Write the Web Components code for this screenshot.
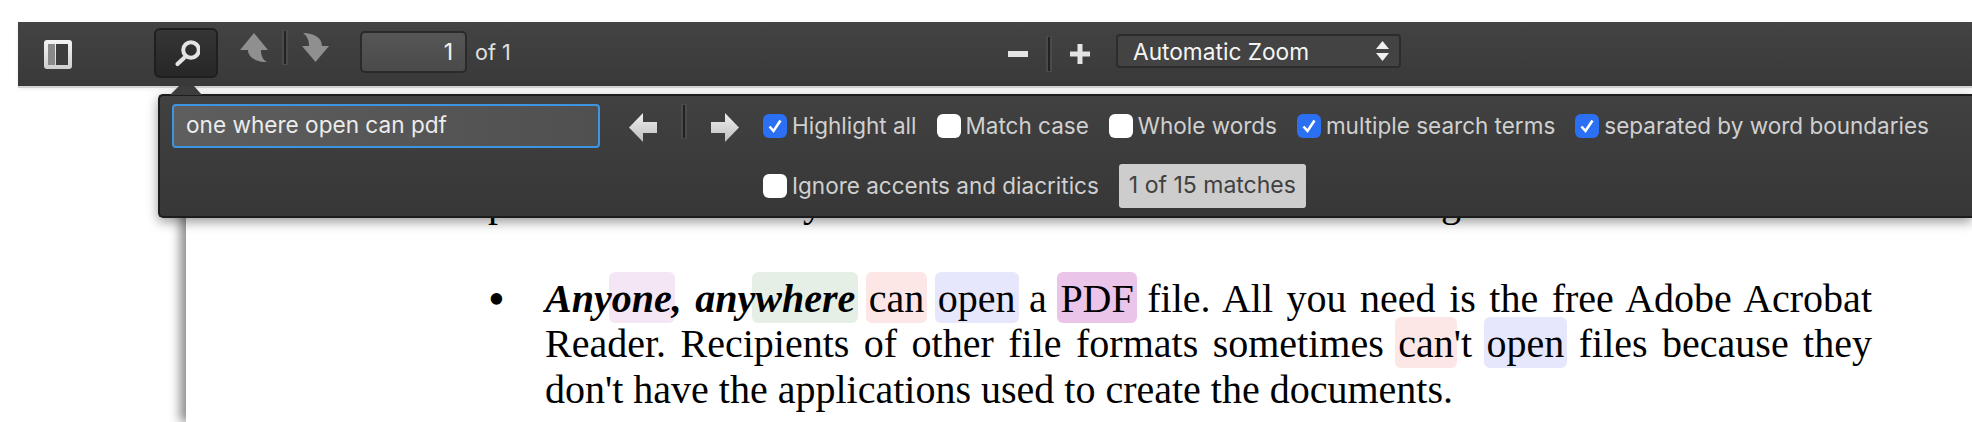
<!DOCTYPE html>
<html lang="en">
<head>
<meta charset="utf-8">
<title>PDF viewer find bar</title>
<style>
html, body { margin: 0; background: #fff; }
</style>
</head>
<body>
<pdf-viewer>
    <pdf-toolbar slot="toolbar"></pdf-toolbar>
    <find-bar slot="find">
        <find-option checked>Highlight all</find-option>
        <find-option>Match case</find-option>
        <find-option>Whole words</find-option>
        <find-option checked>multiple search terms</find-option>
        <find-option checked>separated by word boundaries</find-option>
        <find-option>Ignore accents and diacritics</find-option>
    </find-bar>
    <pdf-page slot="page"></pdf-page>
</pdf-viewer>

<script>
(function () {
    'use strict';

    const UI_FONT = 'Inter, "Noto Sans", sans-serif';

    // thin grooved divider used between the arrow and zoom buttons
    const SEP = (h) => `<span style="display:block;flex:none;box-sizing:border-box;width:6px;height:${h}px;background:#222;border:2px solid #4a4a4a;border-width:1px 2px"></span>`;

    class PdfViewer extends HTMLElement {
        constructor() {
            super();
            this.attachShadow({ mode: 'open' });
        }

        connectedCallback() {
            this.shadowRoot.innerHTML = `
                <style>
                    :host { display: block; position: relative; height: 422px; box-sizing: border-box; padding-top: 22px; overflow: hidden; background: #fff; }
                </style>
                <slot name="toolbar"></slot>
                <slot name="page"></slot>
                <slot name="find"></slot>
            `;
        }
    }

    class PdfToolbar extends HTMLElement {
        constructor() {
            super();
            this.attachShadow({ mode: 'open' });
        }

        connectedCallback() {
            this.shadowRoot.innerHTML = `
                <style>
                    :host { display: flex; position: relative; z-index: 1; align-items: center; height: 64px; margin-left: 18px; border-bottom: 2px solid #d2d2d2; background: linear-gradient(#434343, #393939); box-shadow: 0 1px 4px rgba(0, 0, 0, .08); color: #e0e0e0; font: 21.5px ${UI_FONT}; }
                    svg { display: block; flex: none; }
                    .toggle { margin-left: 26px; }
                    .search { display: flex; align-items: center; justify-content: center; box-sizing: border-box; width: 64px; height: 50px; margin: 0 0 2px 82px; border: 2px solid #1f1f1f; border-radius: 6px; background: linear-gradient(#353535, #272727); }
                    .raised { margin-bottom: 13px; }
                    .page { box-sizing: border-box; width: 107px; height: 42px; margin: 0 0 4px 31px; padding-right: 12px; border: 2px solid #2a2a2a; border-radius: 5px; background: linear-gradient(#565656, #4a4a4a); color: #f2f2f2; font-size: 23px; line-height: 38px; text-align: right; }
                    .of { margin: 0 0 4px 8px; }
                    .zoom { display: flex; align-items: center; margin-left: auto; margin-right: 571px; }
                    .select { display: flex; align-items: center; justify-content: space-between; box-sizing: border-box; width: 285px; height: 34px; margin: 0 0 6px 26px; padding: 0 7px 0 15px; border: 2px solid #2c2c2c; border-radius: 4px; background: #434343; color: #f5f5f5; font-size: 22.7px; }
                </style>
                <svg class="toggle" width="28" height="29" viewBox="0 0 28 29">
                    <defs><linearGradient id="lt" x1="0" y1="0" x2="0" y2="1"><stop offset="0" stop-color="#f4f4f4"/><stop offset="1" stop-color="#cfcfcf"/></linearGradient></defs>
                    <rect width="28" height="29" rx="3" fill="url(#lt)"/>
                    <rect x="4" y="4" width="7" height="21" fill="#8a8a8a"/>
                    <rect x="12" y="4" width="12" height="21" fill="#3d3d3d"/>
                </svg>
                <span class="search">
                    <svg width="28" height="28" viewBox="0 0 28 28" fill="none" stroke="#e4e4e4">
                        <circle cx="19" cy="11" r="7.8" stroke-width="4"/>
                        <path d="M12 19 5.5 25" stroke-width="4.2" stroke-linecap="round"/>
                    </svg>
                </span>
                <svg class="raised" style="margin-left:22px" width="28" height="29" viewBox="0 0 28 29">
                    <path d="M14 0 28 17H21C21 23 23 27 27 29 17 29 8 25 8 17H0Z" fill="#8f8f8f"/>
                </svg>
                <span class="raised" style="margin-left:14px">${SEP(35)}</span>
                <svg class="raised" style="margin-left:14px" width="27" height="29" viewBox="0 0 27 29">
                    <path d="M1 0C12 0 20 5 20 13H27L13.5 29 0 13H7C7 7 5 3 1 0Z" fill="#8f8f8f"/>
                </svg>
                <span class="page">1</span>
                <span class="of">of 1</span>
                <span class="zoom">
                    <svg width="20" height="6" viewBox="0 0 20 6"><rect width="20" height="6" fill="#e4e4e4"/></svg>
                    <span style="margin:0 18px">${SEP(36)}</span>
                    <svg width="20" height="20" viewBox="0 0 20 20"><path d="M7.5 0h5v7.5H20v5h-7.5V20h-5v-7.5H0v-5h7.5z" fill="#e4e4e4"/></svg>
                    <span class="select">Automatic Zoom
                        <svg width="19" height="20" viewBox="0 0 19 20"><path d="M9.5 0 16 8H3zM3 12H16L9.5 20z" fill="#f0f0f0"/></svg>
                    </span>
                </span>
            `;
        }
    }

    class FindOption extends HTMLElement {
        constructor() {
            super();
            this.attachShadow({ mode: 'open' });
        }

        connectedCallback() {
            const tick = this.hasAttribute('checked')
                ? '<svg width="24" height="24" viewBox="0 0 24 24"><path d="M6.5 12.5 10.5 17 17.5 6.5" fill="none" stroke="#fff" stroke-width="2.6"/></svg>'
                : '';
            this.shadowRoot.innerHTML = `
                <style>
                    :host { display: flex; align-items: center; gap: 5px; height: 44px; color: #d0d0d0; font: 22.5px ${UI_FONT}; white-space: nowrap; }
                    .box { display: block; width: 24px; height: 24px; border-radius: 6px; background: #fff; }
                    :host([checked]) .box { background: #2b6ff2; }
                    .label { margin-top: -2px; }
                    svg { display: block; }
                </style>
                <span class="box">${tick}</span>
                <span class="label"><slot></slot></span>
            `;
        }
    }

    class FindBar extends HTMLElement {
        constructor() {
            super();
            this.attachShadow({ mode: 'open' });
        }

        connectedCallback() {
            this.shadowRoot.innerHTML = `
                <style>
                    :host { position: absolute; z-index: 2; left: 158px; top: 94px; right: 0; display: flex; align-items: flex-start; box-sizing: border-box; height: 124px; padding: 8px 0 0 12px; border: solid #1d1d1d; border-width: 2px 0 2px 2px; border-radius: 5px 0 0 5px; background: linear-gradient(#414141, #373737); box-shadow: 0 4px 12px rgba(0, 0, 0, .4); font: 22.5px ${UI_FONT}; }
                    :host::before { content: ""; position: absolute; left: 10px; top: -10px; width: 32px; height: 9px; background: #3d3d3d; clip-path: polygon(0 100%, 9px 0, 24px 0, 100% 100%); }
                    svg { display: block; flex: none; }
                    .query { box-sizing: border-box; flex: none; width: 428px; height: 44px; padding-left: 12px; border: 2px solid #3d95e2; border-radius: 4px; background: linear-gradient(90deg, #5e5e5e, #505050); color: #ececec; font-size: 22.6px; line-height: 38px; white-space: nowrap; }
                    .nav { display: flex; align-items: flex-start; flex: none; width: 163px; }
                    .nav .prev { margin: 9px 0 0 29px; }
                    .nav .sep { margin: 0 0 0 24px; }
                    .nav .next { margin: 9px 0 0 24px; }
                    .options { display: flex; flex-wrap: wrap; align-items: center; flex: 1; gap: 16px 20px; min-width: 0; }
                    .count { display: block; height: 44px; padding: 0 10px; border-radius: 3px; background: #cdcdcd; color: #404040; font-size: 23px; line-height: 42px; white-space: nowrap; }
                </style>
                <div class="query">one where open can pdf</div>
                <div class="nav">
                    <svg class="prev" width="28" height="29" viewBox="0 0 28 29">
                        <defs><linearGradient id="ar" x1="0" y1="0" x2="0" y2="1"><stop offset="0" stop-color="#f0f0f0"/><stop offset="1" stop-color="#bdbdbd"/></linearGradient></defs>
                        <path d="M0 14.5 14 0V9H28V20H14V29Z" fill="url(#ar)"/>
                    </svg>
                    <span class="sep">${SEP(35)}</span>
                    <svg class="next" width="28" height="29" viewBox="0 0 28 29">
                        <path d="M28 14.5 14 0V9H0V20H14V29Z" fill="url(#ar)"/>
                    </svg>
                </div>
                <div class="options">
                    <slot></slot>
                    <span class="count">1 of 15 matches</span>
                </div>
            `;
        }
    }

    class MarkHit extends HTMLElement {
        constructor() {
            super();
            this.attachShadow({ mode: 'open' });
        }

        connectedCallback() {
            // no whitespace around the slot: this element sits inside running text.
            // the tints are translucent, like the viewer's own highlight layer
            this.shadowRoot.innerHTML = `<style>
                :host { border-radius: 3px; background: var(--hit); box-shadow: 0 -1px 0 3px var(--hit); }
                :host([tone="pink"]) { --hit: rgba(155, 5, 165, .1); }
                :host([tone="green"]) { --hit: rgba(5, 95, 5, .1); }
                :host([tone="red"]) { --hit: rgba(235, 5, 5, .1); }
                :host([tone="blue"]) { --hit: rgba(5, 5, 235, .1); }
                :host([tone="purple"]) { --hit: rgba(188, 58, 182, .3); }
            </style><slot></slot>`;
        }
    }

    class PdfPage extends HTMLElement {
        constructor() {
            super();
            this.attachShadow({ mode: 'open' });
        }

        connectedCallback() {
            this.shadowRoot.innerHTML = `
                <style>
                    :host { display: block; box-sizing: border-box; height: 334px; margin-left: 186px; padding: 92px 100px 0 302px; box-shadow: -6px 0 10px rgba(0, 0, 0, .45); background: #fff; color: #000; font: 40px/45.5px "Liberation Serif", serif; clip-path: inset(0 0 0 -20px); }
                    .tail { display: flex; height: 45.5px; }
                    .item { display: flex; margin-top: 50px; }
                    .bullet { flex: none; width: 57px; font-size: 48px; }
                    .text { flex: 1; min-width: 0; text-align: justify; }
                </style>
                <div class="tail"><span>p</span><span style="margin-left:295px">y</span><span style="margin-left:618px">g</span></div>
                <div class="item">
                    <span class="bullet">•</span>
                    <div class="text"><b><i>Any<mark-hit tone="pink">one</mark-hit>, any<mark-hit tone="green">where</mark-hit></i></b> <mark-hit tone="red">can</mark-hit> <mark-hit tone="blue">open</mark-hit> a <mark-hit tone="purple">PDF</mark-hit> file. All you need is the free Adobe Acrobat Reader. Recipients of other file formats sometimes <mark-hit tone="red">can</mark-hit>'t <mark-hit tone="blue">open</mark-hit> files because they don't have the applications used to create the documents.</div>
                </div>
            `;
        }
    }

    customElements.define('pdf-viewer', PdfViewer);
    customElements.define('pdf-toolbar', PdfToolbar);
    customElements.define('find-option', FindOption);
    customElements.define('find-bar', FindBar);
    customElements.define('mark-hit', MarkHit);
    customElements.define('pdf-page', PdfPage);
})();
</script>
</body>
</html>
